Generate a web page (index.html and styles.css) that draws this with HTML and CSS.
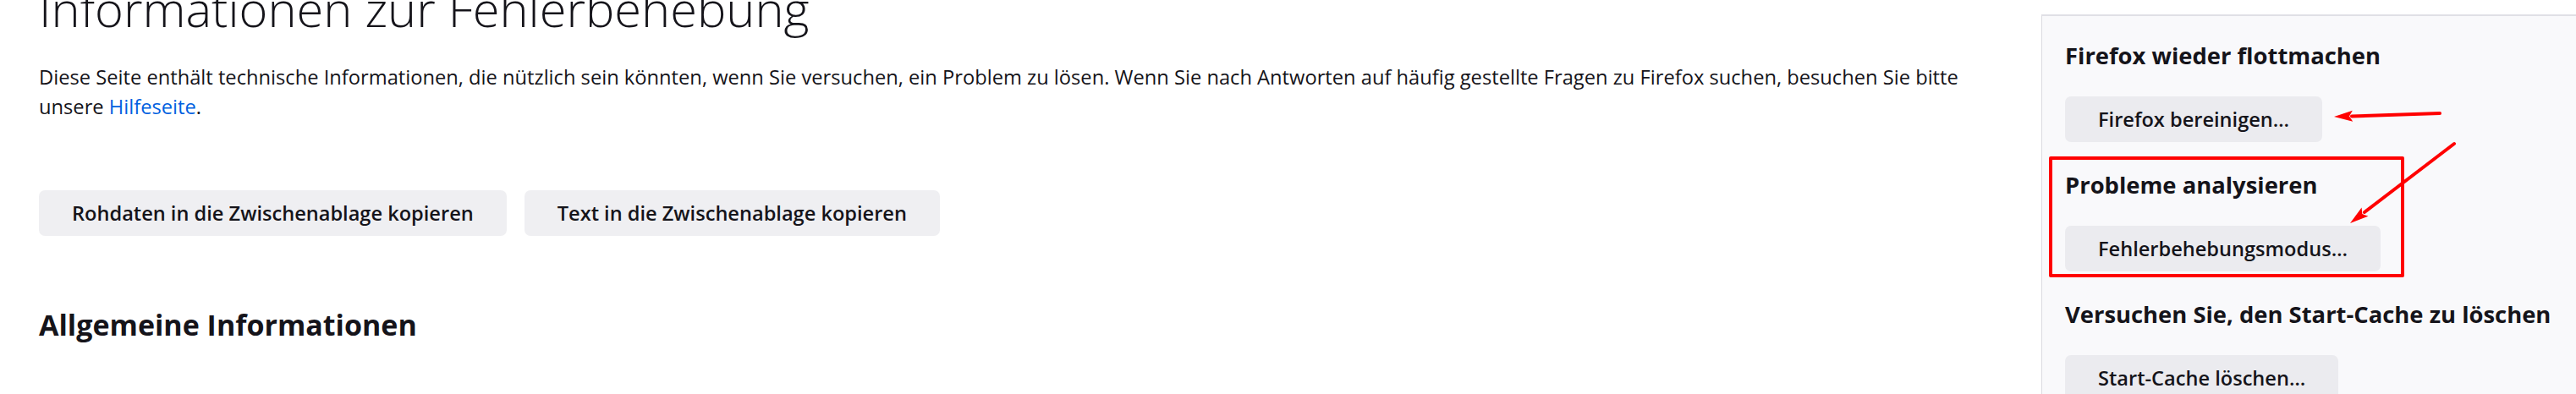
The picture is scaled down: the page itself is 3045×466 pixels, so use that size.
FILE: index.html
```html
<!DOCTYPE html>
<html lang="de">
<head>
<meta charset="utf-8">
<title>Informationen zur Fehlerbehebung</title>
<link rel="stylesheet" href="styles.css">
</head>
<body>
<div class="page">
  <main class="content">
    <h1>Informationen zur Fehlerbehebung</h1>
    <p class="intro">Diese Seite enthält technische Informationen, die nützlich sein könnten, wenn Sie versuchen, ein Problem zu lösen. Wenn Sie nach Antworten auf häufig gestellte Fragen zu Firefox suchen, besuchen Sie bitte unsere <a href="#">Hilfeseite</a>.</p>
    <div class="copy-actions">
      <button class="btn">Rohdaten in die Zwischenablage kopieren</button>
      <button class="btn">Text in die Zwischenablage kopieren</button>
    </div>
    <h2>Allgemeine Informationen</h2>
  </main>

  <aside class="action-box">
    <section class="action-section">
      <h3>Firefox wieder flottmachen</h3>
      <button class="btn">Firefox bereinigen…</button>
    </section>
    <section class="action-section">
      <h3>Probleme analysieren</h3>
      <button class="btn">Fehlerbehebungsmodus…</button>
    </section>
    <section class="action-section">
      <h3>Versuchen Sie, den Start-Cache zu löschen</h3>
      <button class="btn">Start-Cache löschen…</button>
    </section>

    <!-- screenshot markup drawn on top -->
    <div class="callout"></div>
    <svg class="annotations" width="632" height="447" viewBox="0 0 632 447">
      <g stroke="#ff0000" stroke-width="4" stroke-linecap="round" fill="none">
        <line x1="470" y1="115" x2="366" y2="118.4"/>
        <line x1="487" y1="151" x2="381" y2="232"/>
      </g>
      <g fill="#ff0000">
        <polygon points="345,119 366.8,111.8 363,118.4 367.2,124.8"/>
        <polygon points="364,245 377.6,226.4 378.3,234.1 385.4,236.8"/>
      </g>
    </svg>
  </aside>
</div>
</body>
</html>
```

FILE: styles.css
```css
body {
    margin: 0;
    height: 100vh;
    overflow: hidden;
    background-color: #fff;
    color: #15141a;
    font-family: "Open Sans", "Noto Sans", sans-serif;
}

.page {
    display: flex;
    align-items: flex-start;
}

.content {
    flex: 1;
    min-width: 0;
    padding: 0 40px 0 46px;
}

h1 {
    margin: -25px 0 0;
    font-size: 57.8px;
    font-weight: 300;
    line-height: 1.2;
}

.intro {
    margin: 30px 0 0;
    font-size: 23.7px;
    line-height: 35px;
}

.intro a {
    color: #0061e0;
    text-decoration: none;
}

.copy-actions {
    display: flex;
    gap: 21px;
    margin-top: 81px;
}

h2 {
    margin: 85px 0 0;
    font-size: 34px;
    font-weight: 700;
    line-height: 1.2;
}

.btn {
    padding: 10px 39px 9px;
    font-family: inherit;
    font-size: 23.6px;
    font-weight: 600;
    line-height: 35px;
    color: #15141a;
    background-color: rgba(207, 207, 216, 0.33);
    border: none;
    border-radius: 7px;
    cursor: pointer;
}

.action-box {
    position: relative;
    flex: none;
    width: 632px;
    min-height: 100vh;
    margin-top: 17px;
    padding: 31px 0 0 27px;
    box-sizing: border-box;
    background-color: #f9f9fb;
    border-top: 2px solid #e0e0e6;
    border-left: 1px solid #dcdce1;
}

.action-section {
    margin-bottom: 35px;
}

.action-section h3 {
    margin: 0 0 31px;
    font-size: 27.4px;
    font-weight: 700;
    line-height: 1.2;
    white-space: nowrap;
}

.callout {
    position: absolute;
    left: 8px;
    top: 166px;
    width: 420px;
    height: 143px;
    box-sizing: border-box;
    border: 4px solid #ff0000;
    border-radius: 2px;
}

.annotations {
    position: absolute;
    left: 0;
    top: 0;
    overflow: visible;
    pointer-events: none;
}
```
